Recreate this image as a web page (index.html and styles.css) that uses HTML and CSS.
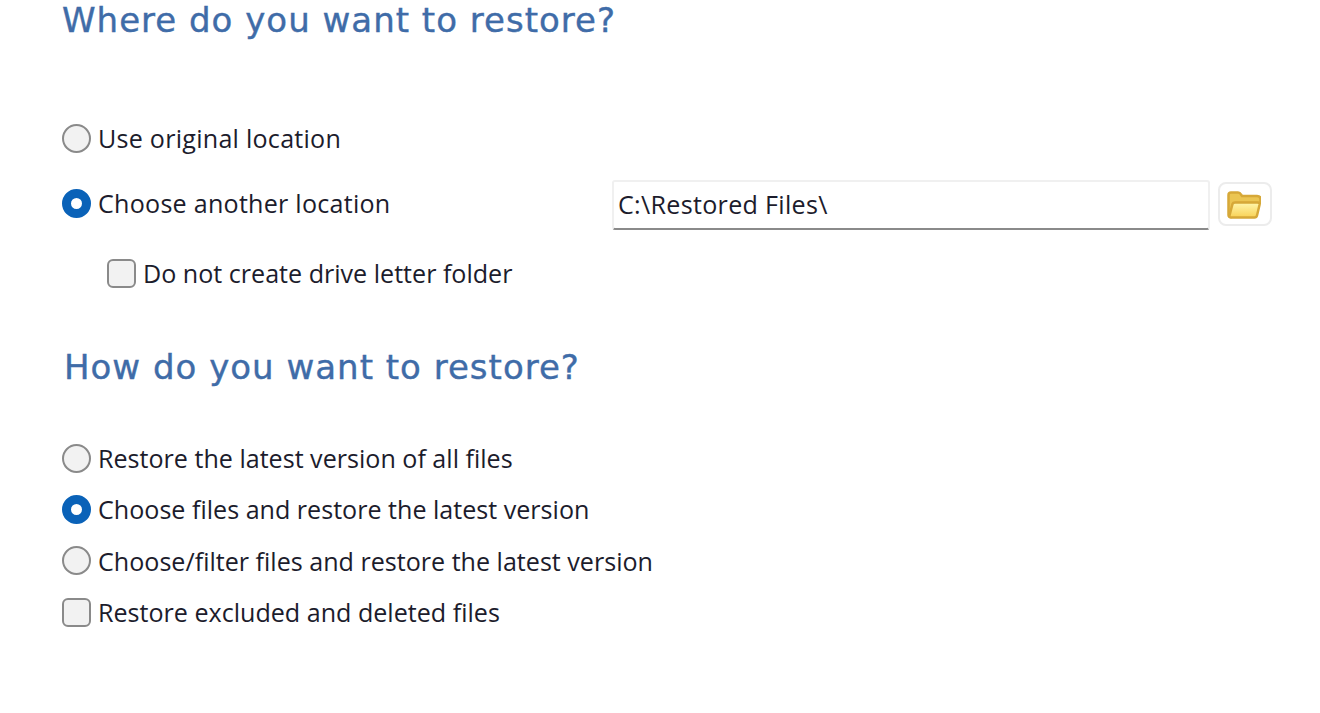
FILE: index.html
```html
<!DOCTYPE html>
<html>

<head>
	<meta charset="utf-8">
	<title>Restore</title>
	<link rel="stylesheet" href="styles.css">
</head>

<body>
	<div class="page">
		<h2 class="title">Where do you want to restore?</h2>

		<div class="options where">
			<div class="row wide"><span class="radio"></span><span>Use original location</span></div>
			<div class="row split">
				<div class="pick wide"><span class="radio on"></span><span>Choose another location</span></div>
				<div class="path">
					<div class="path-box">C:\Restored Files\</div>
					<div class="browse">
						<svg class="folder" width="34" height="28" viewBox="0 0 34 28">
							<defs>
								<linearGradient id="front" x1="0" y1="0" x2="0" y2="1">
									<stop offset="0" stop-color="#fff7ad" />
									<stop offset="1" stop-color="#f8d155" />
								</linearGradient>
							</defs>
							<path d="M1.500 24V4q0-2.500 2.500-2.500h7q2 0 3 2l1 1.500h15q3.500 0 3.500 3v4H9L4 26q-2.500 0-2.500-2z" fill="#ebc552" stroke="#d6a838" stroke-width="2.500" />
							<path d="M8 11.500h22.500q2.500 0 2 2.500l-2.500 10.500q-.5 2-2.500 2H4q-2 0-1.500-2l3-11.500q.5-1.500 2.500-1.500z" fill="url(#front)" stroke="#d6a838" stroke-width="2.500" />
						</svg>
					</div>
				</div>
			</div>
			<div class="row sub"><span class="check"></span><span>Do not create drive letter folder</span></div>
		</div>

		<h2 class="title second">How do you want to restore?</h2>

		<div class="options how">
			<div class="row tight"><span class="radio"></span><span>Restore the latest version of all files</span></div>
			<div class="row tight"><span class="radio on"></span><span>Choose files and restore the latest version</span></div>
			<div class="row tight"><span class="radio"></span><span>Choose/filter files and restore the latest version</span></div>
			<div class="row tight"><span class="check"></span><span>Restore excluded and deleted files</span></div>
		</div>
	</div>
</body>

</html>
```

FILE: styles.css
```css
body {
	margin: 0;
	background-color: #fff;
}

.page {
	height: 713px;
	padding-left: 62px;
	padding-right: 48px;
	box-sizing: border-box;
	overflow: hidden;
	font-family: "Open Sans", sans-serif;
	font-size: 25.100px;
	color: #1c1c2c;
}

.title {
	margin: 0;
	font-family: "DejaVu Sans", sans-serif;
	font-size: 34px;
	font-weight: normal;
	letter-spacing: 1px;
	line-height: 40px;
	color: #3f6ca8;
	-webkit-text-stroke: 0.4px #3f6ca8;
}

.second {
	margin-top: 54px;
	margin-left: 2px;
}

.options {
	display: flex;
	flex-direction: column;
}

.where {
	margin-top: 78px;
}

.how {
	margin-top: 51px;
}

.row {
	display: flex;
	align-items: center;
	height: 40px;
	margin-bottom: 25px;
	gap: 7px;
}

.row.tight {
	margin-bottom: 11.400px;
}

.row.sub {
	margin-left: 45px;
	margin-top: 5px;
	margin-bottom: 0;
}

.row.split {
	justify-content: space-between;
}

.wide {
	letter-spacing: 0.25px;
}

.pick {
	display: flex;
	align-items: center;
	gap: 7px;
}

.radio {
	width: 29px;
	height: 29px;
	box-sizing: border-box;
	border: 2px solid #8a8a8a;
	border-radius: 50%;
	background-color: #f2f2f2;
}

.radio.on {
	border: 9px solid #0a62b8;
	background-color: #fff;
}

.check {
	width: 29px;
	height: 29px;
	box-sizing: border-box;
	border: 2px solid #8a8a8a;
	border-radius: 6px;
	background-color: #f2f2f2;
}

.path {
	display: flex;
	align-items: flex-start;
	gap: 8px;
	margin-top: 4px;
}

.path-box {
	width: 598px;
	height: 50px;
	box-sizing: border-box;
	padding: 0 4px;
	line-height: 44px;
	letter-spacing: 0.3px;
	border: 2px solid #f0f0f0;
	border-bottom: 2px solid #8a8a8a;
	border-radius: 3px;
}

.browse {
	display: flex;
	align-items: center;
	justify-content: center;
	width: 54px;
	height: 44px;
	margin-top: 2px;
	box-sizing: border-box;
	border: 2px solid #ececec;
	border-radius: 8px;
}

.folder {
	margin-right: 3px;
	margin-top: 2px;
}
```
